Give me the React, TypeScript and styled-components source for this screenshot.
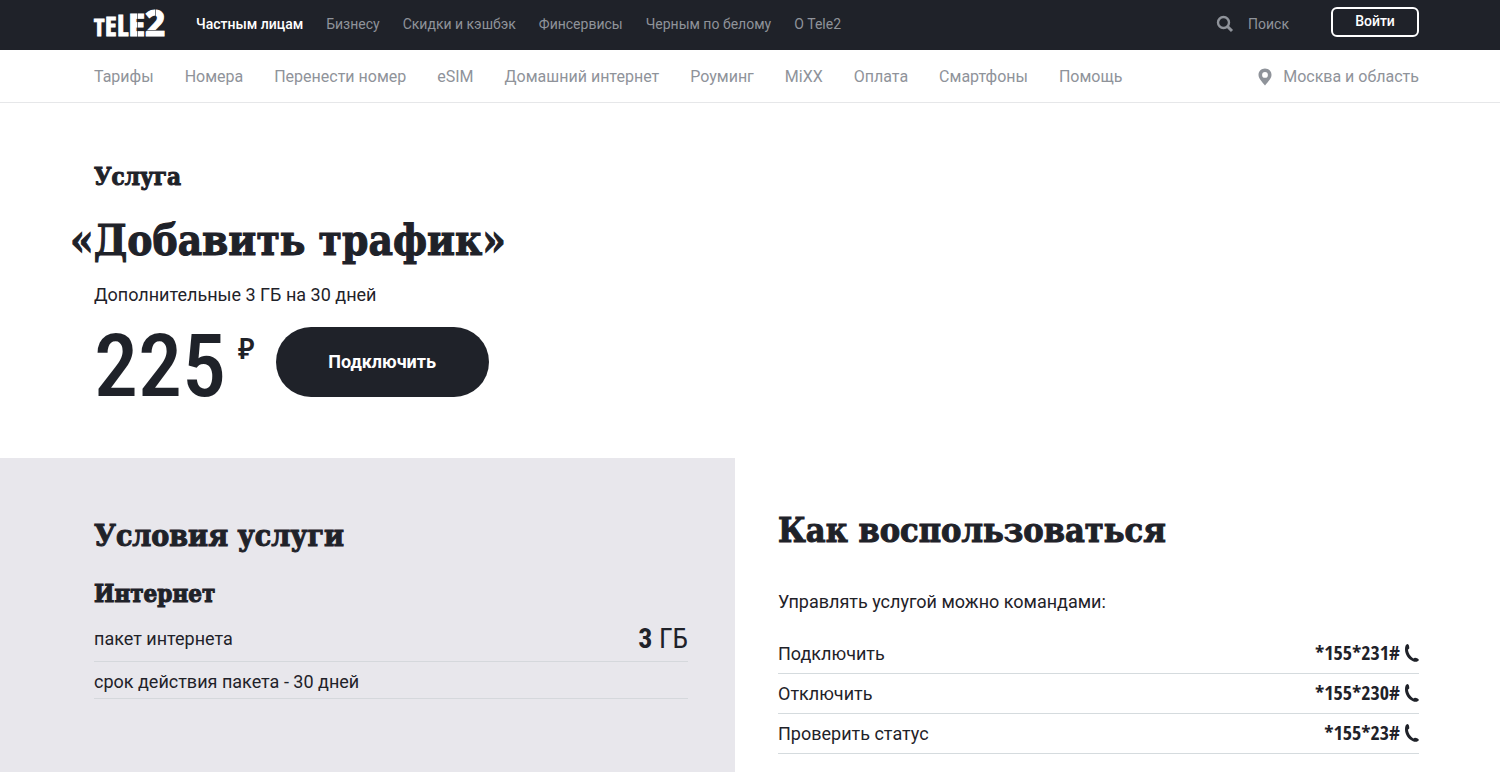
import React from 'react';
import styled, { createGlobalStyle } from 'styled-components';

const ink = '#1f2229';
const muted = '#8f939a';
const serif = '"DejaVu Serif Condensed", "DejaVu Serif", serif';

const GlobalStyle = createGlobalStyle`
  *, *::before, *::after { box-sizing: border-box; }
  body {
    margin: 0;
    background: #fff;
    color: ${ink};
    font-family: Roboto, "Noto Sans", sans-serif;
    font-size: 18px;
    line-height: 24px;
  }
  #root { display: flex; flex-direction: column; min-height: 100vh; }
  h1, h2, h3, p, ul, dl, dd { margin: 0; padding: 0; }
  h1, h2, h3 { -webkit-text-stroke: 1px ${ink}; }
  ul { list-style: none; }
  a { color: inherit; text-decoration: none; }
  button { font: inherit; color: inherit; cursor: pointer; }
`;

const TopBar = styled.header`
  display: flex;
  align-items: center;
  height: 50px;
  padding: 0 81px 2px 94px;
  background: ${ink};
  color: ${muted};
  font-size: 14px;
  line-height: 20px;
`;

const LogoLink = styled.a`
  display: block;
  width: 72px;
  height: 48px;
  margin-right: 30px;
  svg { display: block; overflow: visible; }
`;

const LogoLetter = styled.text<{ $narrow?: boolean }>`
  font-family: ${(p) => (p.$narrow ? '"Open Sans Condensed", ' : '')}"Noto Sans", sans-serif;
  font-weight: ${(p) => (p.$narrow ? 700 : 800)};
  fill: #fff;
  stroke: #fff;
  stroke-width: 1px;
`;

const LinkList = styled.ul<{ $gap: number }>`
  display: flex;
  flex: 1;
  gap: ${(p) => p.$gap}px;
  white-space: nowrap;
`;

const TopLink = styled.a<{ $active?: boolean }>`
  color: ${(p) => (p.$active ? '#fff' : 'inherit')};
  font-weight: ${(p) => (p.$active ? 500 : 400)};
`;

const SearchButton = styled.button`
  display: flex;
  align-items: center;
  gap: 14px;
  margin-right: 42px;
  padding: 0;
  border: 0;
  background: none;
`;

const LoginButton = styled.button`
  width: 88px;
  height: 30px;
  margin-bottom: 4px;
  padding: 0 0 2px;
  border: 2px solid #fff;
  border-radius: 6px;
  background: none;
  color: #fff;
  font-weight: 500;
`;

const SubNav = styled.nav`
  display: flex;
  align-items: center;
  height: 53px;
  padding: 1px 81px 0 94px;
  border-bottom: 1px solid #e6e7e9;
  color: ${muted};
  font-size: 16px;
  line-height: 20px;
`;

const Region = styled.a`
  display: flex;
  align-items: center;
  gap: 11px;
  white-space: nowrap;
`;

const Hero = styled.section`
  padding: 56px 81px 61px 94px;
`;

const SmallHeading = styled.h3`
  font: 700 24px/36px ${serif};
`;

const Kicker = styled(SmallHeading).attrs({ as: 'p' })`
  -webkit-text-stroke: 1px ${ink};
`;

const Title = styled.h1`
  margin-top: 14px;
  font: 700 42px/64px ${serif};
  text-indent: -24px;
`;

const Description = styled.p`
  margin-top: 10px;
`;

const Purchase = styled.div`
  display: flex;
  align-items: center;
  margin-top: 20px;
`;

const Price = styled.p`
  display: flex;
  align-items: flex-start;
  gap: 12px;
  height: 70px;
  margin-right: 21px;
  font: 500 88px/78px "Roboto Condensed", Roboto, sans-serif;
`;

const Currency = styled.span`
  font: 600 28px/42px "Noto Sans", sans-serif;
`;

const ConnectButton = styled.button`
  width: 213px;
  height: 70px;
  border: 0;
  border-radius: 35px;
  background: ${ink};
  color: #fff;
  font-weight: 700;
`;

const Columns = styled.div`
  display: grid;
  grid-template-columns: 49fr 51fr;
  flex: 1;
`;

const Terms = styled.section`
  padding: 56px 47px 70px 94px;
  background: #e8e7ec;
`;

const Usage = styled.section`
  padding: 50px 81px 18px 43px;
`;

const TermsHeading = styled.h2`
  margin-bottom: 18px;
  font: 700 30px/44px ${serif};
`;

const UsageHeading = styled.h2`
  margin-bottom: 38px;
  font: 700 34px/44px ${serif};
`;

const TermRow = styled.div`
  display: flex;
  justify-content: space-between;
  align-items: center;
  padding: 8px 0 4px;
  border-bottom: 1px solid #d5d8dc;
`;

const Amount = styled.dd`
  font: 400 28px/37px "Roboto Condensed", Roboto, sans-serif;
`;

const Commands = styled.dl`
  margin-top: 20px;
`;

const CommandRow = styled.div`
  display: flex;
  justify-content: space-between;
  align-items: center;
  height: 40px;
  border-bottom: 1px solid #d5dbde;
`;

const CodeLink = styled.a`
  display: flex;
  align-items: center;
  gap: 5px;
  padding-bottom: 2px;
  font: 700 20px/24px "Open Sans Condensed", "Open Sans", sans-serif;
`;

const Logo = () => (
  <svg width="72" height="48" viewBox="0 0 72 48" role="img" aria-label="Tele2">
    <LogoLetter $narrow x="0" y="36" fontSize="24">T</LogoLetter>
    <LogoLetter $narrow x="11" y="36" fontSize="27">E</LogoLetter>
    <LogoLetter $narrow x="23" y="36" fontSize="29">L</LogoLetter>
    <LogoLetter x="34" y="36" fontSize="31">E</LogoLetter>
    <LogoLetter x="51" y="36" fontSize="35">2</LogoLetter>
    <path d="M43.500 12v25M52 30.500h19M61.500 9v7" stroke={ink} strokeWidth="0.600" fill="none" />
  </svg>
);

const SearchIcon = () => (
  <svg width="18" height="18" viewBox="0 0 18 18" fill="none" stroke="currentColor" aria-hidden="true">
    <circle cx="7.500" cy="7.500" r="5.500" strokeWidth="2.400" />
    <path d="M11.500 11.500l4.500 4.500" strokeWidth="3" />
  </svg>
);

const PinIcon = () => (
  <svg width="14" height="18" viewBox="0 0 14 18" fill="currentColor" aria-hidden="true">
    <path
      fillRule="evenodd"
      d="M7 .5C3.300.5.5 3.300.5 6.800c0 4 3.300 6.700 6.500 10.700 3.200-4 6.500-6.700 6.500-10.700C13.500 3.300 10.700.5 7 .5zm0 3.500a2.900 2.900 0 1 1 0 5.800A2.900 2.900 0 0 1 7 4z"
    />
  </svg>
);

const PhoneIcon = () => (
  <svg width="14" height="18" viewBox="0 0 14 18" fill="currentColor" aria-hidden="true">
    <path d="M2.600 0C3.900.3 4.500 2.800 4.200 4.600L2.900 5.700C3.300 9 5.500 12.600 8.300 14.500L9.900 13.800C11.600 13.700 14 15 13.900 16C13.200 17.900 10.200 18.200 8 17.200C3.200 15.200 0 10.300 0 5.200C0 2.400.9.200 2.600 0Z" />
  </svg>
);

const topLinks = ['Частным лицам', 'Бизнесу', 'Скидки и кэшбэк', 'Финсервисы', 'Черным по белому', 'О Tele2'];

const navLinks = [
  'Тарифы', 'Номера', 'Перенести номер', 'eSIM', 'Домашний интернет',
  'Роуминг', 'MiXX', 'Оплата', 'Смартфоны', 'Помощь',
];

const commands = [
  { label: 'Подключить', code: '*155*231#' },
  { label: 'Отключить', code: '*155*230#' },
  { label: 'Проверить статус', code: '*155*23#' },
];

export default function App() {
  return (
    <>
      <GlobalStyle />
      <TopBar>
        <LogoLink href="#"><Logo /></LogoLink>
        <LinkList $gap={23}>
          {topLinks.map((label, i) => (
            <li key={label}><TopLink href="#" $active={i === 0}>{label}</TopLink></li>
          ))}
        </LinkList>
        <SearchButton type="button"><SearchIcon />Поиск</SearchButton>
        <LoginButton type="button">Войти</LoginButton>
      </TopBar>
      <SubNav>
        <LinkList $gap={31}>
          {navLinks.map((label) => (
            <li key={label}><a href="#">{label}</a></li>
          ))}
        </LinkList>
        <Region href="#"><PinIcon />Москва и область</Region>
      </SubNav>
      <Hero>
        <Kicker>Услуга</Kicker>
        <Title>«Добавить трафик»</Title>
        <Description>Дополнительные 3 ГБ на 30 дней</Description>
        <Purchase>
          <Price>225<Currency>₽</Currency></Price>
          <ConnectButton type="button">Подключить</ConnectButton>
        </Purchase>
      </Hero>
      <Columns>
        <Terms>
          <TermsHeading>Условия услуги</TermsHeading>
          <SmallHeading>Интернет</SmallHeading>
          <dl>
            <TermRow>
              <dt>пакет интернета</dt>
              <Amount><b>3</b> ГБ</Amount>
            </TermRow>
            <TermRow>
              <dt>срок действия пакета - 30 дней</dt>
            </TermRow>
          </dl>
        </Terms>
        <Usage>
          <UsageHeading>Как воспользоваться</UsageHeading>
          <p>Управлять услугой можно командами:</p>
          <Commands>
            {commands.map(({ label, code }) => (
              <CommandRow key={code}>
                <dt>{label}</dt>
                <dd><CodeLink href={`tel:${encodeURIComponent(code)}`}>{code}<PhoneIcon /></CodeLink></dd>
              </CommandRow>
            ))}
          </Commands>
        </Usage>
      </Columns>
    </>
  );
}
